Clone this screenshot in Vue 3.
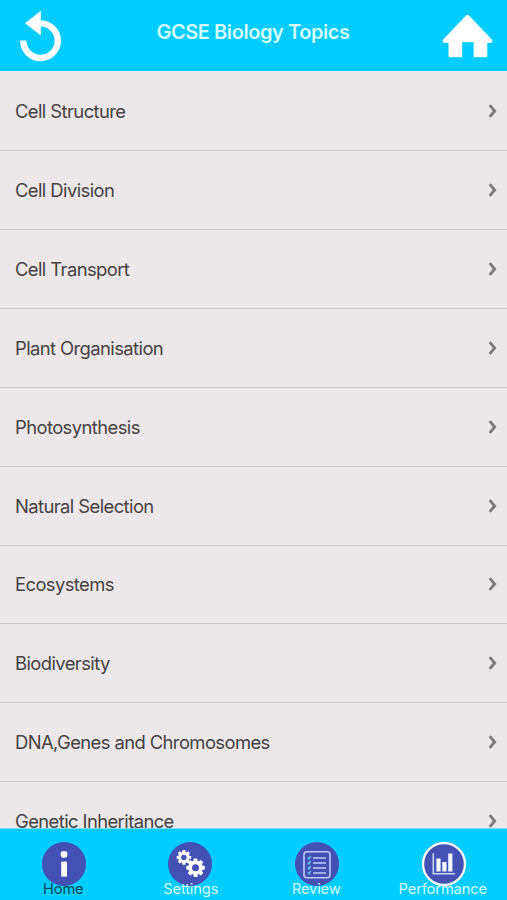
<script setup>
const topics = [
  'Cell Structure', 'Cell Division', 'Cell Transport', 'Plant Organisation', 'Photosynthesis',
  'Natural Selection', 'Ecosystems', 'Biodiversity', 'DNA,Genes and Chromosomes', 'Genetic Inheritance'
]
const tabs = [
  { id: 'home', label: 'Home' },
  { id: 'settings', label: 'Settings' },
  { id: 'review', label: 'Review' },
  { id: 'performance', label: 'Performance' }
]
function gear(cx, cy, r) {
  const points = []
  for (let i = 0; i < 8; i++) {
    for (const [offset, scale] of [[-0.31, 0.76], [-0.18, 1], [0.18, 1], [0.31, 0.76]]) {
      const a = (i * Math.PI) / 4 + offset
      points.push(`${(cx + Math.cos(a) * r * scale).toFixed(2)},${(cy + Math.sin(a) * r * scale).toFixed(2)}`)
    }
  }
  return points.join(' ')
}
</script>

<template>
  <div class="screen">
    <header class="header">
      <button class="nav" aria-label="Back">
        <svg width="44" height="54" viewBox="0 0 44 54">
          <path d="M4.2 31.6A17.3 17.3 0 1 0 21.5 14.4" fill="none" stroke="#fff" stroke-width="6.4" />
          <path d="M6 14.3 21.8 1.8v24.7z" fill="#fff" />
        </svg>
      </button>
      <h1>GCSE Biology Topics</h1>
      <button class="nav" aria-label="Home">
        <svg width="52" height="54" viewBox="0 0 52 54">
          <path d="M25.5 6.5 49.5 31.5 47.5 33.5H44.8V47.7H32.1V32.7H19.7V47.7H7V33.5H4.5L2 31.5z" fill="#fff" stroke="#fff" stroke-width="1" stroke-linejoin="round" />
          <path d="M2.6 31.8 25.5 7.8 48.4 31.8" fill="none" stroke="#fff" stroke-width="4" stroke-linecap="round" stroke-linejoin="round" />
        </svg>
      </button>
    </header>
    <main class="list">
      <div v-for="topic in topics" :key="topic" class="row">
        <span>{{ topic }}</span>
        <svg width="9" height="14" viewBox="0 0 9 14">
          <path d="M1.7 1.2 6.7 7 1.7 12.8" fill="none" stroke="#7b7879" stroke-width="2.8" />
        </svg>
      </div>
    </main>
    <nav class="tabs">
      <div v-for="tab in tabs" :key="tab.id" class="tab" :class="tab.id">
        <svg width="46" height="46" viewBox="0 0 46 46">
          <circle cx="23" cy="23" r="22" fill="#4350b4" />
          <g v-if="tab.id === 'home'" fill="#fff">
            <circle cx="23" cy="13.4" r="3.4" />
            <path d="M20.2 20.6h5.8v15h-5.8z" />
          </g>
          <g v-else-if="tab.id === 'settings'" fill="#fff">
            <polygon :points="gear(16.9, 16.4, 7.4)" />
            <polygon :points="gear(28.5, 26.7, 9.4)" />
            <circle cx="16.9" cy="16.4" r="2.7" fill="#4350b4" />
            <circle cx="28.5" cy="26.7" r="3.5" fill="#4350b4" />
          </g>
          <g v-else-if="tab.id === 'review'" fill="none" stroke="#bfcaff">
            <rect x="10" y="10.8" width="26" height="26" rx="3" stroke-width="1.6" />
            <path d="M19 17h13M19 22h13M19 27h13M19 32h13" stroke-width="1.6" />
            <path d="m14 16.4 1 1.5 1.6-2.8M14 21.4l1 1.5 1.6-2.8M14 26.4l1 1.5 1.6-2.8M14 31.4l1 1.5 1.6-2.8" stroke="#65c7f4" stroke-width="1.4" />
          </g>
          <g v-else>
            <circle cx="23" cy="23" r="21" fill="#4350b4" stroke="#f4fbff" stroke-width="2.4" />
            <path d="M12.3 12.2v20.5h21.8" fill="none" stroke="#c8d5fb" stroke-width="1.6" />
            <path d="M15.4 17.5h4.2v13h-4.2zM21.3 21h4.2v9.5h-4.2zM27.2 12.6h4.2v17.9h-4.2z" fill="#f4f7ff" />
          </g>
        </svg>
        <span class="label">{{ tab.label }}</span>
      </div>
    </nav>
  </div>
</template>

<style>
body { margin: 0; overflow: hidden; }
</style>
<style scoped>
.screen {
  width: 507px;
  height: 900px;
  display: flex;
  flex-direction: column;
  overflow: hidden;
  background: #ece8e9;
  font-family: Inter, "Liberation Sans", sans-serif;
}
.header {
  flex: 0 0 71px;
  box-sizing: border-box;
  display: flex;
  justify-content: space-between;
  align-items: flex-start;
  padding: 9px 13px 0 19px;
  background: #00ccff;
}
.nav {
  display: block;
  width: 52px;
  height: 54px;
  padding: 0;
  border: 0;
  background: none;
}
.nav svg { display: block; }
h1 {
  margin: 11px 7px 0 0;
  font-size: 20px;
  line-height: 24px;
  font-weight: 600;
  letter-spacing: -0.43px;
  color: #d5fbff;
  white-space: nowrap;
}
.list {
  flex: 1;
  min-height: 0;
  overflow: hidden;
  padding-top: 1.2px;
}
.row {
  box-sizing: border-box;
  height: 78.9px;
  display: flex;
  align-items: center;
  justify-content: space-between;
  padding: 0 10px 0 15px;
  border-bottom: 1.5px solid #cbc7c9;
  font-size: 18.4px;
  letter-spacing: -0.58px;
  color: #464243;
}
.tabs {
  flex: 0 0 72px;
  box-sizing: border-box;
  display: grid;
  grid-template-columns: repeat(4, 126.5px);
  border-top: 1px solid #7fdcf5;
  padding: 12px 0 0 1px;
  background: #00ccff;
}
.tab {
  display: flex;
  flex-direction: column;
  align-items: center;
}
.tab svg { flex: none; }
.settings svg { margin-right: 1px; }
.label {
  position: relative;
  margin: -7px 2px 0 0;
  font-size: 14.7px;
  line-height: 18px;
  letter-spacing: -0.15px;
  color: #d5fbff;
}
.settings .label { margin-right: 0; }
.home .label { color: #144755; }
</style>
